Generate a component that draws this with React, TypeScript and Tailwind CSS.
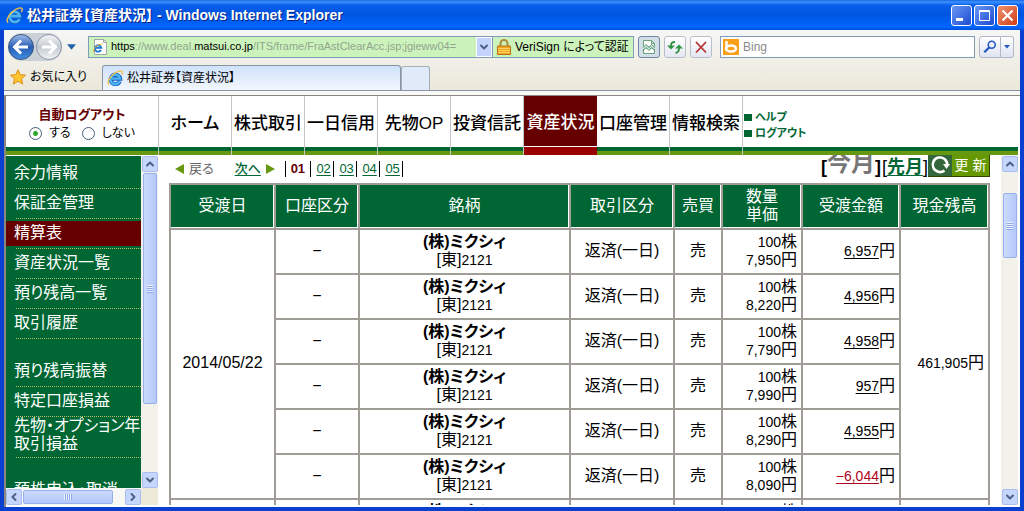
import React, { useState } from 'react';
import { ChevronDown, ChevronLeft, ChevronRight, ChevronUp } from 'lucide-react';

const menuItems = ['ホーム', '株式取引', '一日信用', '先物OP', '投資信託', '資産状況', '口座管理', '情報検索'];

const sideGroups = [
    ['余力情報', '保証金管理', '精算表', '資産状況一覧', '預り残高一覧', '取引履歴'],
    ['預り残高振替', '特定口座損益', '先物・オプション年間取引損益'],
    ['預株申込・取消'],
];

const trades = [
    { price: '7,950', amount: '6,957' },
    { price: '8,220', amount: '4,956' },
    { price: '7,790', amount: '4,958' },
    { price: '7,990', amount: '957' },
    { price: '8,290', amount: '4,955' },
    { price: '8,090', amount: '−6,044' },
    { price: '8,100', amount: '4,955' },
];

const IeLogo: React.FC<{ className?: string }> = ({ className }) => (
    <svg viewBox="0 0 16 16" className={className} fill="none" aria-hidden="true">
        <path d="M12.8 11.4A4.800 4.800 0 1 1 13.200 8.800H5" stroke="#1260c0" strokeWidth="4" />
        <path d="M12.700 11.200A4.800 4.800 0 1 1 13 8.600H5" stroke="#4db4f5" strokeWidth="2.400" />
        <path d="M2.200 14.800C-.6 13.400 2.200 7.400 7 3.800c3.600-2.700 7.400-3.700 8.200-2.200.4.8 0 2-.8 3.200" stroke="#f2c14a" strokeWidth="1.300" />
    </svg>
);

const NavArrows: React.FC = () => (
    <div className="flex h-7 shrink-0 items-center rounded-full bg-[#c9d0d8]">
        <button aria-label="戻る" className="h-[26px] w-[26px] rounded-full border border-[#37537f] bg-gradient-to-b from-[#9dbbe8] via-[#2a5cb4] to-[#3f8ee0]">
            <svg viewBox="0 0 24 24" fill="none" stroke="#fff" strokeWidth="3">
                <path d="M19 12H6M12 5.500 5.500 12l6.500 6.500" />
            </svg>
        </button>
        <button aria-label="進む" className="ml-[2px] h-[26px] w-[26px] rounded-full border border-[#8d98a5] bg-gradient-to-b from-[#f2f4f6] via-[#c4cad2] to-[#eef1f4]">
            <svg viewBox="0 0 24 24" fill="none" stroke="#fff" strokeWidth="3">
                <path d="M5 12h13M12 5.500l6.500 6.500-6.500 6.500" />
            </svg>
        </button>
    </div>
);

const ToolButton: React.FC<{ label: string; pressed?: boolean; children: React.ReactNode }> = ({ label, pressed, children }) => (
    <button
        aria-label={label}
        className={`flex h-[22px] w-[22px] shrink-0 items-center justify-center rounded-[3px] border ${
            pressed ? 'border-[#7189a0] bg-[#d3dfe8]' : 'border-[#b9bfca] bg-gradient-to-b from-white to-[#e4e8f2]'
        }`}
    >
        {children}
    </button>
);

const AddressBar: React.FC = () => {
    const [url, setUrl] = useState('https://www.deal.matsui.co.jp/ITS/frame/FraAstClearAcc.jsp;jgieww04=');
    const [editing, setEditing] = useState(false);
    return (
        <div className="flex h-[22px] min-w-0 flex-1 border border-[#7f9db9] bg-[#cdf3bd]">
            <div className="flex w-[22px] shrink-0 items-center justify-center">
                <svg viewBox="0 0 16 16" className="h-4 w-4" aria-hidden="true">
                    <path d="M2.500.5h9l3 3v12h-12z" fill="#fff" stroke="#a5a5a5" />
                    <path d="M11.500.5v3h3" fill="none" stroke="#a5a5a5" />
                    <path d="M9 11A3.200 3.200 0 1 1 9.300 8.800H3.500" fill="none" stroke="#1c78d2" strokeWidth="1.800" />
                    <path d="M1.500 13C0 11 6 4.500 10.500 5" fill="none" stroke="#f0b020" />
                </svg>
            </div>
            <div className="relative flex min-w-0 flex-1 items-center overflow-hidden text-[11px]">
                <input
                    aria-label="アドレス"
                    className="h-full w-full bg-transparent outline-none"
                    value={editing ? url : ''}
                    onChange={(e) => setUrl(e.target.value)}
                    onFocus={() => setEditing(true)}
                    onBlur={() => setEditing(false)}
                />
                {!editing && (
                    <span className="pointer-events-none absolute inset-y-0 left-0 flex items-center whitespace-pre text-[#90a58c]">
                        <span className="text-black">https</span>://www.deal.<span className="text-black">matsui.co.jp</span>/ITS/frame/FraAstClearAcc.jsp;jgieww04=
                    </span>
                )}
            </div>
            <button aria-label="履歴" className="flex w-4 shrink-0 items-center justify-center border border-white bg-[#c3d3fb]">
                <ChevronDown className="h-3 w-3 text-[#4d6185]" strokeWidth={4} />
            </button>
            <button className="flex w-[141px] shrink-0 items-center gap-1 whitespace-nowrap border-l border-[#7f9db9] pl-1 text-xs">
                <svg viewBox="0 0 14 16" className="h-4 w-[14px]" aria-hidden="true">
                    <path d="M3.500 8V4.500a3.500 3.500 0 0 1 7 0V8" fill="none" stroke="#a88b3c" strokeWidth="2" />
                    <path d="M.5 7h13v8.500H.5z" fill="#f3a423" stroke="#b87410" />
                    <path d="M1 9.500h12M1 11.500h12M1 13.500h12" stroke="#ffd266" />
                </svg>
                VeriSign によって認証
            </button>
        </div>
    );
};

const TitleBar: React.FC = () => (
    <header className="flex h-[30px] shrink-0 items-center bg-[linear-gradient(to_bottom,#1a66e0_0,#3c92ff_2px,#0a5fec_5px,#0054e0_14px,#0066ff_27px,#0050d8_30px)] pr-[6px] pl-[6px]">
        <IeLogo className="h-[17px] w-[17px]" />
        <h1 className="ml-1 flex-1 whitespace-pre pt-px text-[14px] font-bold text-white [text-shadow:1px_1px_0_#0a1f80]">
            松井証券【資産状況】 - Windows Internet Explorer
        </h1>
        <div className="flex gap-[2px]">
            <button aria-label="最小化" className="h-[21px] w-[21px] rounded-[3px] border border-white bg-gradient-to-br from-[#6a97f6] to-[#1c48cf]">
                <svg viewBox="0 0 19 19"><path d="M4 12h7v3H4z" fill="#fff" /></svg>
            </button>
            <button aria-label="最大化" className="h-[21px] w-[21px] rounded-[3px] border border-white bg-gradient-to-br from-[#6a97f6] to-[#1c48cf]">
                <svg viewBox="0 0 19 19" fill="none" stroke="#fff"><path d="M4.500 4.500h10v10h-10zM4 5.500h11" /></svg>
            </button>
            <button aria-label="閉じる" className="h-[21px] w-[21px] rounded-[3px] border border-white bg-gradient-to-br from-[#f0906c] to-[#cf3a10]">
                <svg viewBox="0 0 19 19" stroke="#fff" strokeWidth="2.200"><path d="m4.500 4.500 10 10M14.500 4.500l-10 10" /></svg>
            </button>
        </div>
    </header>
);

const Toolbar: React.FC = () => (
    <div className="flex h-[33px] shrink-0 items-center gap-1 pr-[6px] pl-1">
        <NavArrows />
        <svg viewBox="0 0 10 6" className="mr-2 ml-px h-[6px] w-[9px] shrink-0" aria-hidden="true"><path d="M0 0h10L5 6z" fill="#2562a6" /></svg>
        <AddressBar />
        <ToolButton label="互換表示" pressed>
            <svg viewBox="0 0 16 16" className="h-4 w-4" fill="none" stroke="#6ca07c">
                <path d="M2.500 7V1.500h8l3 3V7M2.500 10v4.500h11V10M10.500 1.500v3h3" fill="#fff" />
                <path d="m2 8.500 3-3 3 3 2.500-3 3.500 3M2 11.500l3-3 3 3 2.500-3 3.500 3" stroke="#3f8e52" />
            </svg>
        </ToolButton>
        <ToolButton label="最新の情報に更新">
            <svg viewBox="0 0 16 16" className="h-4 w-4" fill="none" stroke="#2f9440" strokeWidth="1.800">
                <path d="M4 8V6.500C4 4 5.500 3 8 3M12 8v1.500c0 2.500-1 4-3.500 4.500" />
                <path d="M0 6.500h8l-4 4zM8 9.500h8l-4-4z" fill="#2f9440" stroke="none" />
            </svg>
        </ToolButton>
        <ToolButton label="中止">
            <svg viewBox="0 0 16 16" className="h-4 w-4" stroke="#b53535" strokeWidth="1.800"><path d="m3 3 10 10.500M13 3 3 13.500" /></svg>
        </ToolButton>
        <div className="ml-1 flex h-[22px] w-[255px] items-center border border-[#7f9db9] bg-white pl-[2px]">
            <svg viewBox="0 0 16 16" className="h-4 w-4 shrink-0" aria-hidden="true">
                <path d="M0 0h16v16H0z" fill="#f8a01c" />
                <path d="M3.500 2v9.500" stroke="#fff" strokeWidth="2.400" />
                <ellipse cx="8" cy="9.500" rx="5" ry="3" fill="none" stroke="#fff" strokeWidth="2.400" />
            </svg>
            <input aria-label="検索" placeholder="Bing" className="ml-1 min-w-0 flex-1 bg-transparent text-xs outline-none placeholder:text-[#8a8a8a]" />
        </div>
        <div className="flex">
            <button aria-label="検索する" className="flex h-[22px] w-[22px] items-center justify-center rounded-l-[3px] border border-[#b0b8c8] bg-gradient-to-b from-white to-[#dfe4f2]">
                <svg viewBox="0 0 16 16" className="h-[14px] w-[14px]" fill="none" stroke="#2456c4">
                    <circle cx="10" cy="5.500" r="4" strokeWidth="1.800" />
                    <path d="m7 8.500-5.500 5.500" strokeWidth="2.600" />
                </svg>
            </button>
            <button aria-label="検索オプション" className="flex h-[22px] w-[13px] items-center justify-center rounded-r-[3px] border border-l-0 border-[#b0b8c8] bg-gradient-to-b from-white to-[#dfe4f2]">
                <svg viewBox="0 0 6 4" className="h-1 w-[6px]"><path d="M0 0h6L3 3.500z" fill="#2456c4" /></svg>
            </button>
        </div>
    </div>
);

const TabRow: React.FC = () => (
    <div className="flex h-7 shrink-0 items-stretch border-b border-[#8a94a4] text-xs">
        <button className="flex w-[98px] items-center gap-1 pl-[6px]">
            <svg viewBox="0 0 16 16" className="h-4 w-4" aria-hidden="true">
                <path d="m8 .8 2.200 4.900 5.300.5-4 3.600 1.200 5.300L8 12.300l-4.700 2.800 1.200-5.300-4-3.600 5.300-.5z" fill="#ffc52e" stroke="#d98c14" />
            </svg>
            お気に入り
        </button>
        <button className="mt-[2px] flex w-[299px] items-center gap-1 rounded-t-[3px] border border-b-0 border-[#8a94a4] bg-gradient-to-b from-[#cfe2fb] to-[#f3f7fd] pl-1">
            <IeLogo className="h-4 w-4" />
            松井証券【資産状況】
        </button>
        <button aria-label="新しいタブ" className="mt-[3px] w-[29px] rounded-t-[3px] border border-b-0 border-[#a6aebb] bg-[#e0eaf8]" />
    </div>
);

const SiteNav: React.FC = () => (
    <nav className="flex h-[59px] shrink-0 bg-[linear-gradient(to_bottom,#fff_0,#fff_51px,#006633_51px,#006633_55px,#669911_55px)]">
        <div
            role="radiogroup"
            aria-label="自動ログアウト"
            className="flex w-[153px] shrink-0 flex-col items-center border-r border-[#c4c4c4] pt-[10px] text-xs leading-[18px]"
        >
            <p className="text-[13px] font-bold text-[#660000]">自動ログアウト</p>
            <div className="flex items-center gap-[11px]">
                {['する', 'しない'].map((name, i) => (
                    <label key={name} className="flex items-center gap-[7px]">
                        <input
                            type="radio"
                            name="autologout"
                            defaultChecked={i === 0}
                            className="h-[13px] w-[13px] appearance-none rounded-full border border-[#43607c] bg-white checked:bg-[radial-gradient(circle,#2fa82f_0,#2fa82f_2px,#fff_3px)]"
                        />
                        {name}
                    </label>
                ))}
            </div>
        </div>
        {menuItems.map((item) =>
            item === '資産状況' ? (
                <a key={item} href="#" className="flex w-[73px] flex-col bg-[#990000] text-center text-[17px] font-medium whitespace-nowrap text-white">
                    <span className="flex h-[51px] items-center justify-center border-b border-white bg-[#660000] pt-1">{item}</span>
                </a>
            ) : (
                <a key={item} href="#" className="flex w-[73px] flex-col border-r border-[#c4c4c4] text-[17px] font-medium whitespace-nowrap">
                    <span className="flex h-[51px] items-center justify-center pt-1">{item}</span>
                </a>
            ),
        )}
        <div className="pt-[13px] pl-px text-[11px] leading-4 font-bold text-[#006633]">
            {['ヘルプ', 'ログアウト'].map((item) => (
                <a key={item} href="#" className="flex items-center gap-[3px]">
                    <span className="h-[7px] w-2 bg-[#006633]" />
                    {item}
                </a>
            ))}
        </div>
    </nav>
);

const scrollButton = 'flex h-4 w-4 shrink-0 items-center justify-center rounded-[2px] border border-[#a9bdf0] bg-[#c6d5fc] text-[#4d6185]';

const SideMenu: React.FC = () => (
    <aside className="flex w-[152px] shrink-0 flex-col pt-px">
        <div className="flex min-h-0 flex-1">
            <ul className="min-w-0 flex-1 overflow-hidden bg-[#006633] pt-[3px] text-white">
                {sideGroups.map((group, g) => (
                    <React.Fragment key={group[0]}>
                        {g > 0 && <li className="h-[18px]" />}
                        {group.map((item) =>
                            item.startsWith('先物') ? (
                                <li key={item}>
                                    <a href="#" className="block pb-1 pl-2 leading-[18px] whitespace-nowrap">
                                        先物・オプション年間<br />取引損益
                                    </a>
                                    <div className="ml-[10px] border-b border-dotted border-[#b5bd6a]" />
                                </li>
                            ) : (
                                <li key={item} className="pt-[2px]">
                                    <a
                                        href="#"
                                        className={`mb-[2px] flex h-[25px] items-center pb-[2px] pl-2 whitespace-nowrap ${item === '精算表' ? 'bg-[#660000]' : ''}`}
                                    >
                                        {item}
                                    </a>
                                    <div className="ml-[10px] border-b border-dotted border-[#b5bd6a]" />
                                </li>
                            ),
                        )}
                    </React.Fragment>
                ))}
            </ul>
            <div className="flex w-[17px] shrink-0 flex-col items-center bg-[#f3f2ea]">
                <button aria-label="上へ" className={scrollButton}><ChevronUp className="h-3 w-3" strokeWidth={4} /></button>
                <div className="mt-px flex w-[14px] flex-1 flex-col items-center justify-center rounded-[2px] border border-[#98b0ee] bg-gradient-to-r from-[#cbdafe] to-[#b5c8fa]">
                    <span className="h-2 w-[6px] bg-[repeating-linear-gradient(to_bottom,#eef3ff_0,#eef3ff_1px,#8ca6e8_1px,#8ca6e8_2px)]" />
                </div>
                <div className="h-[68px]" />
                <button aria-label="下へ" className={scrollButton}><ChevronDown className="h-3 w-3" strokeWidth={4} /></button>
            </div>
        </div>
        <div className="flex h-[17px] shrink-0 bg-[#ece9d8]">
            <div className="flex w-[135px] items-center bg-[#f8f8f4]">
                <button aria-label="左へ" className={scrollButton}><ChevronLeft className="h-3 w-3" strokeWidth={4} /></button>
                <div className="ml-px flex h-[14px] w-[90px] items-center justify-center rounded-[2px] border border-[#98b0ee] bg-gradient-to-b from-[#cbdafe] to-[#b5c8fa]">
                    <span className="h-[6px] w-2 bg-[repeating-linear-gradient(to_right,#eef3ff_0,#eef3ff_1px,#8ca6e8_1px,#8ca6e8_2px)]" />
                </div>
                <div className="flex-1" />
                <button aria-label="右へ" className={scrollButton}><ChevronRight className="h-3 w-3" strokeWidth={4} /></button>
            </div>
        </div>
    </aside>
);

const Pager: React.FC = () => (
    <div className="-mt-3 flex h-10 items-end pb-[6px] text-[13px]">
        <a href="#" className="ml-[6px] flex items-center gap-[5px] leading-4 text-[#666666]">
            <svg viewBox="0 0 9 10" className="h-[10px] w-[9px]"><path d="M9 0v10L0 5z" fill="#669911" /></svg>
            戻る
        </a>
        <a href="#" className="ml-[21px] flex items-center gap-[5px] leading-4 font-medium text-[#006633]">
            <span className="underline underline-offset-2">次へ</span>
            <svg viewBox="0 0 9 10" className="h-[10px] w-[9px]"><path d="M0 0v10l9-5z" fill="#669911" /></svg>
        </a>
        <ol className="ml-[10px] flex border-l border-black leading-4">
            <li className="w-[25px] border-r border-black text-center font-bold text-[#660000]">01</li>
            {['02', '03', '04', '05'].map((page) => (
                <li key={page} className="w-[23px] border-r border-black pr-[2px] text-right">
                    <a href="#" className="text-[#006633] underline underline-offset-2">{page}</a>
                </li>
            ))}
        </ol>
        <div className="ml-auto flex items-end text-lg leading-5">
            <span className="font-bold">[</span>
            <span className="text-2xl leading-[28px] font-bold text-[#777777]">今月</span>
            <span className="font-bold">]</span>
            <span className="ml-px">[<a href="#" className="font-bold text-[#006633] underline underline-offset-2">先月</a>]</span>
            <button className="flex h-6 w-[62px] items-center border-r border-b border-[#334400] bg-[#669900] text-sm text-white">
                <span className="flex h-full w-[24px] items-center justify-center bg-[#33663a]">
                    <svg viewBox="0 0 20 20" className="h-5 w-5" fill="none" stroke="#fff" strokeWidth="2.600">
                        <path d="M14.500 15.500A7.300 7.300 0 1 1 17.300 10" />
                        <path d="M13 9h7l-3.500 5z" fill="#fff" stroke="none" />
                    </svg>
                </span>
                <span className="flex-1 whitespace-nowrap">更 新</span>
            </button>
        </div>
    </div>
);

const cell = 'border-2 border-[#a09c96] p-0 pb-[2px]';
const headCell = `${cell} bg-[#006633] font-normal text-white shadow-[inset_-1px_-1px_0_0_#ffffff]`;

const Num: React.FC<{ children: React.ReactNode }> = ({ children }) => <span className="text-sm leading-[18px]">{children}</span>;

const StatementTable: React.FC = () => (
    <table className="w-full table-fixed border-collapse text-center text-base leading-[18px]">
        <colgroup>
            <col className="w-[105px]" />
            <col className="w-[84px]" />
            <col />
            <col className="w-[104px]" />
            <col className="w-[48px]" />
            <col className="w-[80px]" />
            <col className="w-[98px]" />
            <col className="w-[89px]" />
        </colgroup>
        <thead>
            <tr className="h-[45px]">
                <th className={headCell}>受渡日</th>
                <th className={headCell}>口座区分</th>
                <th className={headCell}>銘柄</th>
                <th className={headCell}>取引区分</th>
                <th className={headCell}>売買</th>
                <th className={headCell}>数量<br />単価</th>
                <th className={headCell}>受渡金額</th>
                <th className={headCell}>現金残高</th>
            </tr>
        </thead>
        <tbody>
            {trades.map((trade, i) => (
                <tr key={i} className="h-[45px]">
                    {i % 6 === 0 && <td rowSpan={6} className={cell}>{i === 0 && '2014/05/22'}</td>}
                    <td className={cell}>−</td>
                    <td className={cell}>
                        <b>(株)ミクシィ</b><br />[東]<Num>2121</Num>
                    </td>
                    <td className={cell}>返済(一日)</td>
                    <td className={cell}>売</td>
                    <td className={`${cell} pr-1 text-right`}>
                        <Num>100</Num>株<br /><Num>{trade.price}</Num>円
                    </td>
                    <td className={`${cell} pr-1 text-right`}>
                        <a href="#" className={`underline underline-offset-2 ${trade.amount.startsWith('−') ? 'text-[#b00020]' : ''}`}><Num>{trade.amount}</Num></a>円
                    </td>
                    {i % 6 === 0 && <td rowSpan={6} className={`${cell} pr-1 text-right`}>{i === 0 && <><Num>461,905</Num>円</>}</td>}
                </tr>
            ))}
        </tbody>
    </table>
);

const App: React.FC = () => (
    <div className="flex h-screen flex-col overflow-hidden bg-[#0a46d8] font-['Liberation_Sans','Noto_Sans_CJK_JP',sans-serif] text-black [font-feature-settings:'palt']">
        <TitleBar />
        <div className="flex min-h-0 flex-1 flex-col border-4 border-t-0 border-[#0a3fd0] bg-[#f8f8f6]">
            <div className="shrink-0 bg-gradient-to-b from-[#f6f6f6] to-[#ebe8d8]">
                <Toolbar />
                <TabRow />
            </div>
            <div className="mt-1 flex min-h-0 flex-1 flex-col border-t border-l-2 border-[#8a887e] bg-white pr-[2px] pb-[2px]">
                <SiteNav />
                <div className="flex min-h-0 flex-1">
                    <SideMenu />
                    <main className="min-w-0 flex-1 overflow-hidden bg-white pr-[11px] pl-[11px]">
                        <Pager />
                        <StatementTable />
                    </main>
                    <div className="flex w-[17px] shrink-0 flex-col items-center bg-[#f3f2ea] pt-px">
                        <button aria-label="上へスクロール" className={scrollButton}><ChevronUp className="h-3 w-3" strokeWidth={4} /></button>
                        <div className="h-[21px]" />
                        <div className="flex h-[65px] w-[14px] flex-col items-center justify-center rounded-[2px] border border-[#98b0ee] bg-gradient-to-r from-[#cbdafe] to-[#b5c8fa]">
                            <span className="h-2 w-[6px] bg-[repeating-linear-gradient(to_bottom,#eef3ff_0,#eef3ff_1px,#8ca6e8_1px,#8ca6e8_2px)]" />
                        </div>
                        <div className="flex-1" />
                        <button aria-label="下へスクロール" className={scrollButton}><ChevronDown className="h-3 w-3" strokeWidth={4} /></button>
                    </div>
                </div>
            </div>
        </div>
    </div>
);

export default App;
